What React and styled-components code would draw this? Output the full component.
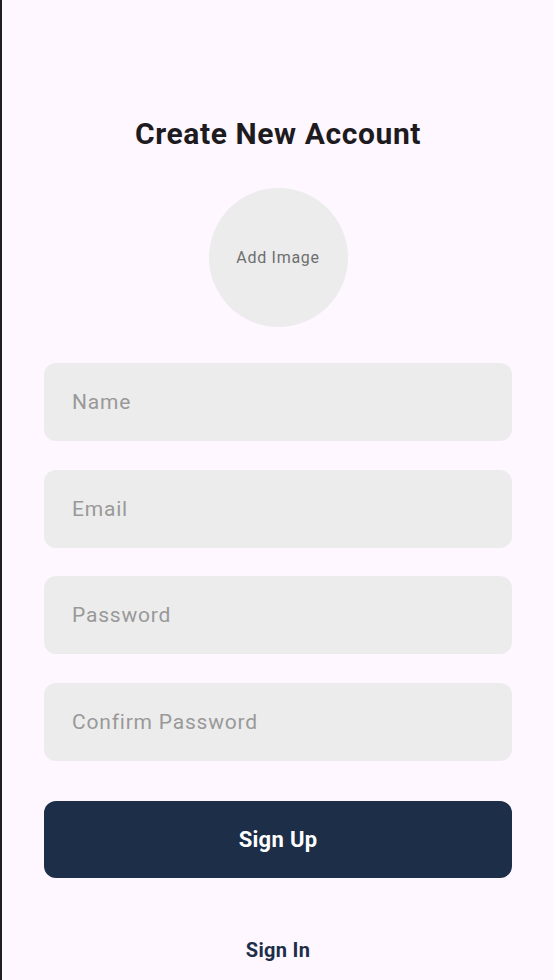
import React from "react";
import styled, { createGlobalStyle } from "styled-components";

const GlobalStyle = createGlobalStyle`
  html, body {
    margin: 0;
    padding: 0;
    background: #fef7ff;
  }
  * {
    box-sizing: border-box;
  }
`;

const Screen = styled.div`
  width: 554px;
  height: 980px;
  border-left: 2px solid #1f1f24;
  background: #fef7ff;
  font-family: Roboto, "Noto Sans", sans-serif;
  display: flex;
  flex-direction: column;
  align-items: center;
  padding: 0 42px;
  overflow: hidden;
`;

const Title = styled.h1`
  margin: 114px 0 0;
  font-size: 30px;
  line-height: 40px;
  font-weight: 700;
  letter-spacing: 0.6px;
  color: #1d1b20;
`;

const Avatar = styled.button`
  margin-top: 34px;
  width: 139px;
  height: 139px;
  border-radius: 50%;
  border: none;
  background: #ececec;
  color: #6f6f6f;
  font-family: inherit;
  font-size: 16px;
  letter-spacing: 0.7px;
  padding: 0;
`;

const Form = styled.form`
  width: 100%;
  margin-top: 36px;
  display: flex;
  flex-direction: column;
  gap: 28.7px;
`;

const Field = styled.input`
  width: 100%;
  height: 78px;
  border: none;
  border-radius: 12px;
  background: #ececec;
  padding: 0 28px;
  font-family: inherit;
  font-size: 21px;
  letter-spacing: 0.8px;
  color: #1d1b20;
  outline: none;
  &::placeholder {
    color: #999999;
  }
`;

const Submit = styled.button`
  width: 100%;
  height: 77px;
  margin-top: 11px;
  border: none;
  border-radius: 12px;
  background: #1d2e48;
  color: #ffffff;
  font-family: inherit;
  font-size: 22px;
  font-weight: 700;
  letter-spacing: 0.3px;
`;

const LinkButton = styled.button`
  margin-top: 60px;
  border: none;
  background: none;
  color: #1d2e48;
  font-family: inherit;
  font-size: 20px;
  font-weight: 700;
  letter-spacing: 0.3px;
  padding: 0;
`;

const fields = ["Name", "Email", "Password", "Confirm Password"];

export default function App() {
  return (
    <>
      <GlobalStyle />
      <Screen>
        <Title>Create New Account</Title>
        <Avatar type="button">Add Image</Avatar>
        <Form onSubmit={(e) => e.preventDefault()}>
          {fields.map((f) => (
            <Field
              key={f}
              placeholder={f}
              type={f.includes("Password") ? "password" : "text"}
            />
          ))}
          <Submit type="submit">Sign Up</Submit>
        </Form>
        <LinkButton type="button">Sign In</LinkButton>
      </Screen>
    </>
  );
}
